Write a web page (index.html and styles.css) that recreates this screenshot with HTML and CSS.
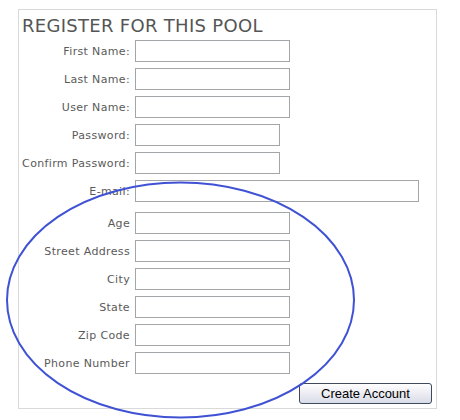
FILE: index.html
```html
<!DOCTYPE html>
<html>
<head>
<meta charset="utf-8">
<link rel="stylesheet" href="styles.css">
</head>
<body>
<div class="page">
  <form class="panel">
    <h1 class="title">REGISTER FOR THIS POOL</h1>
    <div class="fields">
      <div class="row"><label class="label">First Name:</label><input class="input" type="text"></div>
      <div class="row"><label class="label">Last Name:</label><input class="input" type="text"></div>
      <div class="row"><label class="label">User Name:</label><input class="input" type="text"></div>
      <div class="row"><label class="label">Password:</label><input class="input input-short" type="password"></div>
      <div class="row"><label class="label">Confirm Password:</label><input class="input input-short" type="password"></div>
      <div class="row"><label class="label">E-mail:</label><input class="input input-wide" type="text"></div>
    </div>
    <div class="fields fields-extra">
      <div class="row"><label class="label">Age</label><input class="input" type="text"></div>
      <div class="row"><label class="label">Street Address</label><input class="input" type="text"></div>
      <div class="row"><label class="label">City</label><input class="input" type="text"></div>
      <div class="row"><label class="label">State</label><input class="input" type="text"></div>
      <div class="row"><label class="label">Zip Code</label><input class="input" type="text"></div>
      <div class="row"><label class="label">Phone Number</label><input class="input" type="text"></div>
    </div>
    <div class="actions"><button class="button" type="button">Create Account</button></div>
  </form>
  <svg class="annotation" width="460" height="420" viewBox="0 0 460 420">
    <ellipse cx="180.5" cy="300" rx="173.5" ry="117.5" fill="none" stroke="#4052d4" stroke-width="2"/>
  </svg>
</div>
</body>
</html>
```
FILE: styles.css
```css
* { box-sizing: border-box; }
html, body { margin: 0; padding: 0; background: #fff; }
body { width: 460px; height: 420px; overflow: hidden; font-family: "DejaVu Sans", Verdana, sans-serif; }
.page { position: relative; width: 460px; height: 420px; padding: 9px 0 0 18px; }
.panel {
  width: 419px;
  height: 400px;
  border: 1px solid #d9d9d9;
  padding: 5px 0 0 0;
  display: flex;
  flex-direction: column;
}
.title {
  margin: 0 0 4px 3px;
  font-size: 18px;
  line-height: 21px;
  font-weight: normal;
  letter-spacing: 0.3px;
  color: #555;
}
.fields { display: flex; flex-direction: column; gap: 6px; }
.fields-extra { margin-top: 10px; }
.row { display: flex; align-items: center; gap: 5px; height: 22px; }
.label {
  width: 111px;
  text-align: right;
  font-size: 11px;
  letter-spacing: 0.35px;
  color: #5a5a5a;
  white-space: nowrap;
}
.input {
  width: 155px;
  height: 22px;
  margin: 0;
  border: 1px solid #a3a6a9;
  background: #fff;
  padding: 0 3px;
  font-size: 11px;
}
.input-short { width: 145px; }
.input-wide { width: 284px; }
.actions { display: flex; justify-content: flex-end; margin-top: 9px; padding-right: 4px; }
.button {
  width: 133px;
  height: 21px;
  margin: 0;
  padding: 0;
  border: 1px solid #3f4a5c;
  border-radius: 3px;
  background: linear-gradient(#ffffff, #eeeef4 45%, #d9dbe8);
  font-family: "Liberation Sans", Arial, sans-serif;
  font-size: 13px;
  color: #000;
}
.annotation { position: absolute; left: 0; top: 0; pointer-events: none; }
```
